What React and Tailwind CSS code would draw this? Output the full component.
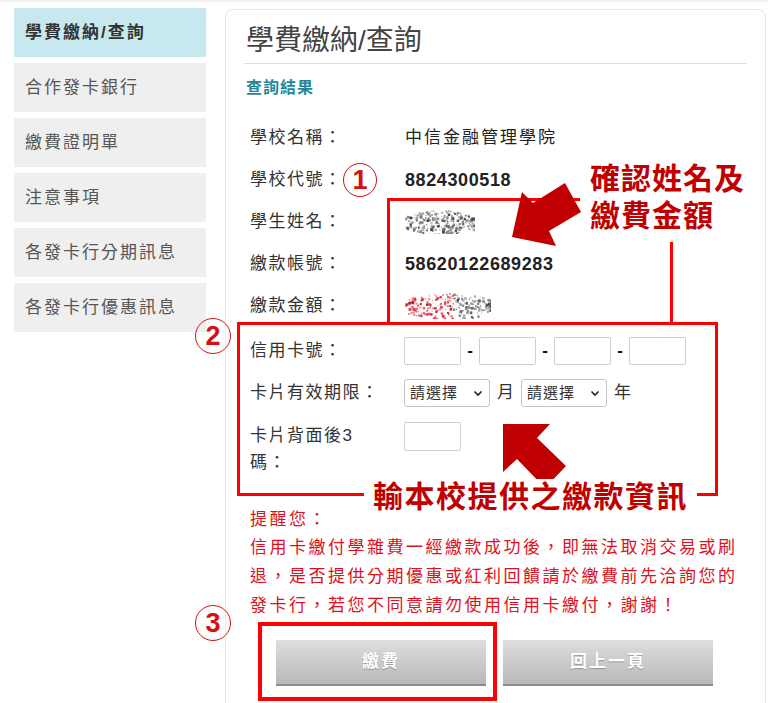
import React from "react";

const FONT = { fontFamily: '"Liberation Sans", "Noto Sans CJK TC", sans-serif' };

function rng(seed) {
  let s = seed;
  return () => {
    s = (s * 1103515245 + 12345) % 2147483648;
    return s / 2147483648;
  };
}

function Noise({ w, h, seed, split }) {
  const r = rng(seed);
  const dots = [];
  for (let i = 0; i < 260; i++) {
    const x = r() * w;
    const y = h / 2 + (r() - 0.5) * h * (0.55 + 0.45 * Math.sin((x / w) * Math.PI));
    const s = 0.8 + r() * 2;
    let color;
    if (split && x < w * 0.55) {
      const c = ["#e02030", "#c81020", "#f06070", "#a01018"];
      color = c[Math.floor(r() * c.length)];
    } else {
      const c = ["#333", "#666", "#999", "#445566", "#777"];
      color = c[Math.floor(r() * c.length)];
    }
    dots.push(
      <rect key={i} x={x} y={y} width={s} height={s} fill={color} opacity={0.45 + r() * 0.5} />
    );
  }
  return (
    <svg width={w} height={h} viewBox={`0 0 ${w} ${h}`}>
      {dots}
    </svg>
  );
}

function Circled({ n, className }) {
  return (
    <div
      className={
        "absolute flex items-center justify-center rounded-full border-[1.5px] border-[#d41010] text-[#d41010] font-bold text-[27px] " +
        className
      }
      style={FONT}
    >
      {n}
    </div>
  );
}

function Chevron() {
  return (
    <svg width="10" height="7" viewBox="0 0 10 7">
      <path d="M1.5 1.5 L5 5 L8.5 1.5" fill="none" stroke="#222" strokeWidth="1.6" />
    </svg>
  );
}

function Select() {
  return (
    <div className="flex h-[28px] w-[86px] items-center justify-between rounded-[3px] border border-[#c4c4c4] bg-white pl-[5px] pr-[6px]">
      <span className="text-[15px] tracking-[1px] text-[#333]">請選擇</span>
      <Chevron />
    </div>
  );
}

function Box({ className }) {
  return <div className={"h-[28px] w-[57px] rounded-[2px] border border-[#cfcfcf] bg-white " + className} />;
}

export default function App() {
  const menu = ["學費繳納/查詢", "合作發卡銀行", "繳費證明單", "注意事項", "各發卡行分期訊息", "各發卡行優惠訊息"];
  const rows = [
    ["學校名稱：", <span className="text-[17px] tracking-[2px] text-[#222]">中信金融管理學院</span>],
    ["學校代號：", <span className="text-[18px] font-bold tracking-[0.6px] text-[#222]">8824300518</span>],
    ["學生姓名：", <Noise w={70} h={24} seed={7} />],
    ["繳款帳號：", <span className="text-[18px] font-bold tracking-[0.6px] text-[#222]">58620122689283</span>],
    ["繳款金額：", <Noise w={86} h={26} seed={19} split />],
  ];
  return (
    <div className="relative h-[703px] w-[768px] overflow-hidden bg-white" style={FONT}>
      <div className="h-[2px] bg-[#f3f3f3]" />
      <div className="flex">
        <div className="ml-[14px] mt-[6px] flex w-[192px] flex-col gap-[6px]">
          {menu.map((m, i) => (
            <div
              key={m}
              className={
                "flex h-[49px] items-center pl-[11px] text-[17px] tracking-[2px] " +
                (i === 0 ? "bg-[#c6e8ee] font-bold text-[#333]" : "bg-[#efefef] text-[#555]")
              }
            >
              {m}
            </div>
          ))}
        </div>
        <div className="ml-[19px] mt-[7px] h-[720px] w-[541px] rounded-[8px] border border-[#e6e6e6]">
          <div className="mx-[18px] border-b border-[#c3e7f1] pb-[4px] pl-[2px] pt-[13px] text-[28px] leading-[36px] text-[#444]">
            學費繳納/查詢
          </div>
          <div className="mt-[12px] pl-[20px] text-[16px] font-bold leading-[24px] tracking-[1px] text-[#23879a]">
            查詢結果
          </div>
          <div className="mt-[17px] pl-[24px]">
            {rows.map(([l, v]) => (
              <div key={l} className="flex h-[42px] items-center">
                <div className="w-[155px] text-[17px] tracking-[1.5px] text-[#333]">{l}</div>
                <div className="flex items-center">{v}</div>
              </div>
            ))}
            <div className="mt-[3px] flex h-[42px] items-center">
              <div className="w-[154px] text-[17px] tracking-[1.5px] text-[#333]">信用卡號：</div>
              <Box />
              <span className="w-[18px] text-center text-[17px] font-bold text-[#111]">-</span>
              <Box />
              <span className="w-[18px] text-center text-[17px] font-bold text-[#111]">-</span>
              <Box />
              <span className="w-[18px] text-center text-[17px] font-bold text-[#111]">-</span>
              <Box />
            </div>
            <div className="flex h-[42px] items-center">
              <div className="w-[154px] text-[17px] tracking-[1.5px] text-[#333]">卡片有效期限：</div>
              <Select />
              <span className="mx-[7px] text-[17px] text-[#333]">月</span>
              <Select />
              <span className="ml-[7px] text-[17px] text-[#333]">年</span>
            </div>
            <div className="flex items-start pt-[8px]">
              <div className="w-[154px] pr-[20px] text-[17px] leading-[27px] tracking-[1.5px] text-[#333]">
                卡片背面後3
                <br />
                碼：
              </div>
              <Box className="h-[29px]" />
            </div>
            <div className="mt-[30px] whitespace-nowrap text-[17px] tracking-[2.5px] text-[#dd1122]">
              <div className="leading-[27px]">提醒您：</div>
              <div className="leading-[29px]">
                信用卡繳付學雜費一經繳款成功後，即無法取消交易或刷
                <br />
                退，是否提供分期優惠或紅利回饋請於繳費前先洽詢您的
                <br />
                發卡行，若您不同意請勿使用信用卡繳付，謝謝！
              </div>
            </div>
          </div>
          <div className="mt-[20px] flex gap-[17px] pl-[50px]">
            {["繳費", "回上一頁"].map((b) => (
              <div
                key={b}
                className="flex h-[46px] w-[210px] items-center justify-center border-b-2 border-[#8c8c8c] bg-linear-to-b from-[#dedede] to-[#b8b8b8] text-[17px] font-bold tracking-[2px] text-white [text-shadow:0_1px_1px_rgba(0,0,0,0.25)]"
              >
                {b}
              </div>
            ))}
          </div>
        </div>
      </div>

      {/* annotations */}
      <div className="absolute left-[387px] top-[198px] h-[126px] w-[193px] border-l-[3px] border-t-[3px] border-[#ff0000]" />
      <div className="absolute left-[670px] top-[242px] h-[82px] w-[3px] bg-[#ff0000]" />
      <div className="absolute left-[237px] top-[322px] h-[174px] w-[481px] border-[3px] border-[#ff0000]" />
      <div className="absolute left-[258px] top-[622px] h-[79px] w-[239px] border-[4px] border-[#ff0000]" />

      <svg className="pointer-events-none absolute left-0 top-0" width="768" height="703">
        <polygon
          points="512,237 522,192 533,203 565,183 581,212 549,231 556,246"
          fill="#c00000"
        />
        <polygon
          points="503,424 550,424 537,438 566,466 545,488 517,459 503,472"
          fill="#c00000"
        />
      </svg>

      <div className="absolute left-[364px] top-[479px] bg-white px-[9px] text-[30px] font-bold leading-[36px] tracking-[1.5px] text-[#c00000]">
        輸本校提供之繳款資訊
      </div>
      <div className="absolute left-[590px] top-[160px] text-[30px] font-bold leading-[37px] tracking-[1px] text-[#c00000]">
        確認姓名及
        <br />
        繳費金額
      </div>

      <Circled n="1" className="left-[343px] top-[163px] h-[34px] w-[34px]" />
      <Circled n="2" className="left-[195px] top-[318px] h-[36px] w-[36px]" />
      <Circled n="3" className="left-[195px] top-[605px] h-[36px] w-[36px]" />
    </div>
  );
}
